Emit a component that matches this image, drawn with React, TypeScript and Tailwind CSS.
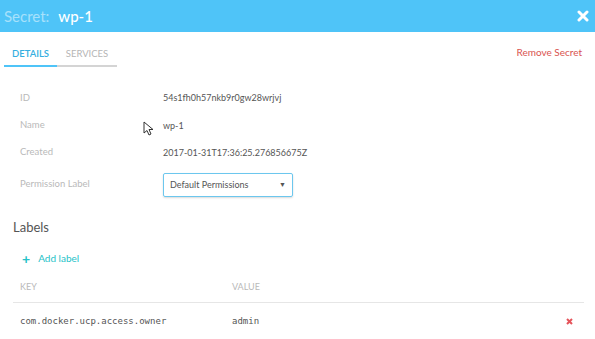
export default function App() {
  return (
    <div className="relative w-[595px] h-[339px] overflow-hidden bg-white font-['Lato',sans-serif]">
      {/* Header */}
      <div className="h-[32px] bg-[#4fc4f8] flex items-center justify-between pl-[4px] pr-[4px]">
        <div className="flex items-baseline gap-[9px] text-[15px]">
          <span className="text-white/50">Secret:</span>
          <span className="text-white font-medium">wp-1</span>
        </div>
        <svg width="12" height="12" viewBox="0 0 12 12" className="mr-[2px]">
          <path d="M2 2 L10 10 M10 2 L2 10" stroke="white" strokeWidth="3" strokeLinecap="round" />
        </svg>
      </div>

      {/* Tabs + remove */}
      <div className="flex items-start justify-between pl-[4px] pr-[13px] pt-[12px]">
        <div className="flex">
          <div className="w-[53px] h-[23px] flex items-center justify-center border-b-2 border-[#4fc4f8] text-[9.5px] text-[#35aee0] font-semibold">
            DETAILS
          </div>
          <div className="w-[60px] h-[23px] flex items-center justify-center border-b-2 border-[#d4d4d4] text-[9.5px] text-[#b5b5b5]">
            SERVICES
          </div>
        </div>
        <span className="text-[10px] text-[#d9534f] mt-[1px]">Remove Secret</span>
      </div>

      {/* Details */}
      <div className="pl-[20px] pt-[17px] flex flex-col text-[9.5px]">
        <div className="flex h-[28px] items-center">
          <span className="w-[143px] text-[#b9b9b9]">ID</span>
          <span className="text-[#555] text-[9px]">54s1fh0h57nkb9r0gw28wrjvj</span>
        </div>
        <div className="flex h-[27px] items-center">
          <span className="w-[143px] text-[#b9b9b9]">Name</span>
          <span className="text-[#555] text-[9px]">wp-1</span>
        </div>
        <div className="flex h-[27px] items-center">
          <span className="w-[143px] text-[#b9b9b9]">Created</span>
          <span className="text-[#555] text-[9px]">2017-01-31T17:36:25.276856675Z</span>
        </div>
        <div className="flex h-[37px] items-center">
          <span className="w-[143px] text-[#b9b9b9]">Permission Label</span>
          <div className="w-[130px] h-[24px] border border-[#6cc7ee] rounded-[2px] shadow-[0_1px_2px_rgba(0,0,0,0.15)] flex items-center justify-between px-[6px] text-[#555] text-[9px]">
            <span>Default Permissions</span>
            <span className="text-[7px]">▼</span>
          </div>
        </div>
      </div>

      {/* Labels */}
      <div className="pl-[13px] pr-[11px] pt-[18px]">
        <div className="text-[13px] text-[#555] leading-none">Labels</div>
        <div className="flex items-center gap-[8px] pl-[9px] pt-[17px] text-[10px] text-[#26c2c8]">
          <span className="text-[14px] font-bold leading-none">+</span>
          <span>Add label</span>
        </div>
        <div className="flex pt-[14px] pb-[8px] pl-[7px] text-[9px] text-[#b9b9b9] border-b border-[#e6e6e6]">
          <span className="w-[212px]">KEY</span>
          <span>VALUE</span>
        </div>
        <div className="flex items-center h-[38px] pl-[7px] text-[9px] text-[#555] font-['DejaVu_Sans_Mono',monospace]">
          <span className="w-[212px]">com.docker.ucp.access.owner</span>
          <span className="flex-1">admin</span>
          <svg width="7" height="7" viewBox="0 0 7 7" className="mr-[11px]">
            <path d="M1 1 L6 6 M6 1 L1 6" stroke="#e5535a" strokeWidth="2" />
          </svg>
        </div>
      </div>

      {/* Mouse cursor */}
      <svg width="12" height="16" viewBox="0 0 12 16" className="absolute left-[143px] top-[121px]">
        <path d="M1 1 L1 12 L4 9.5 L6 14 L8 13 L6 8.5 L10 8.5 Z" fill="white" stroke="#333" strokeWidth="1" strokeLinejoin="round" />
      </svg>
    </div>
  );
}
